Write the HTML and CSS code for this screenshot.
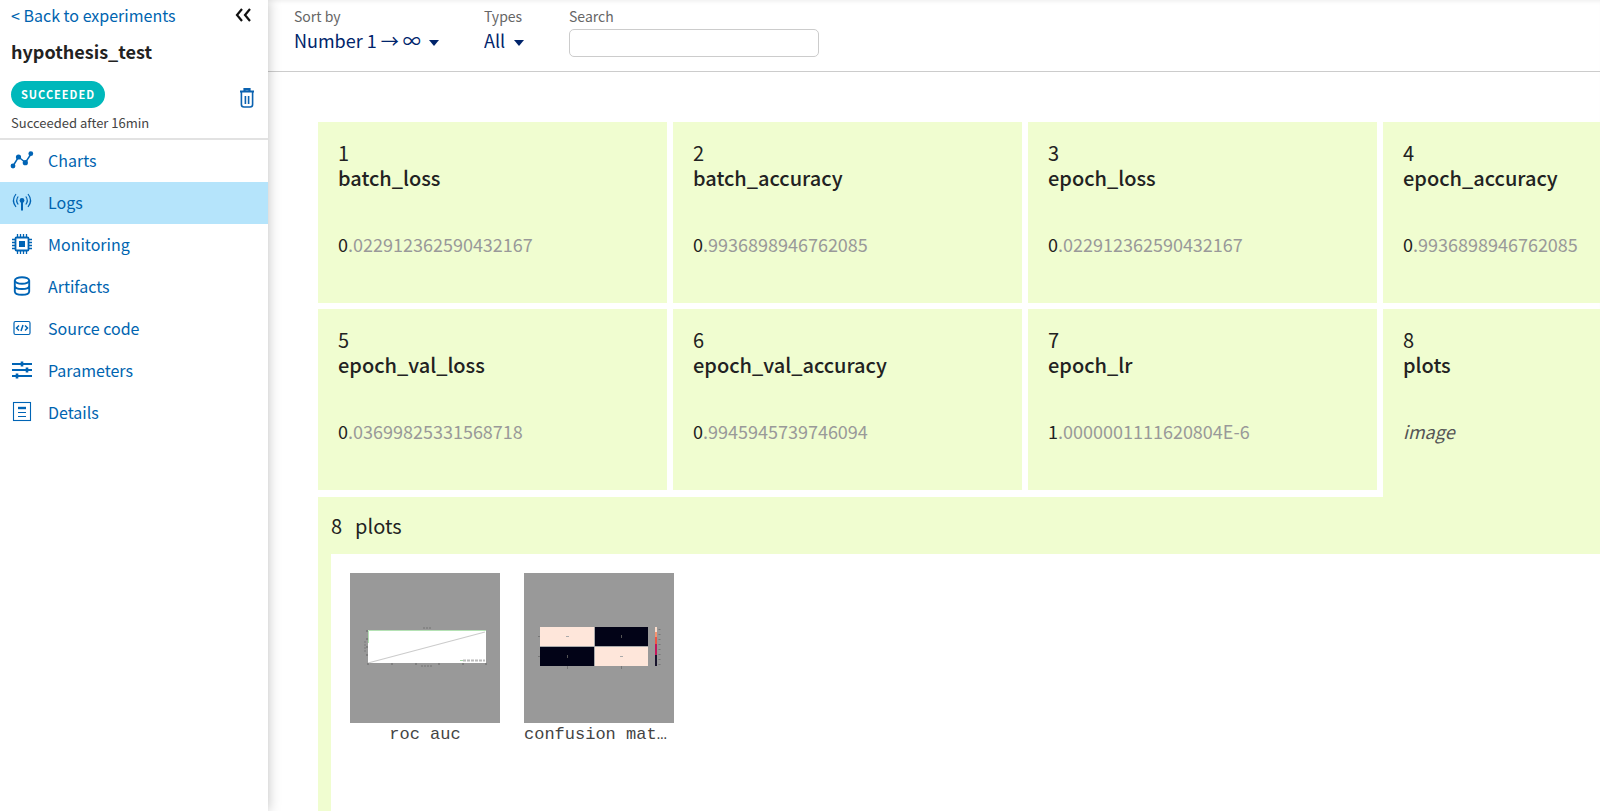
FILE: index.html
```html
<!DOCTYPE html>
<html lang="en">
<head>
    <meta charset="UTF-8">
    <meta name="viewport" content="width=device-width, initial-scale=1.0">
    <title>hypothesis_test - Logs</title>
    <link rel="stylesheet" href="styles.css">
</head>
<body>

<aside class="sidebar">
    <div class="experiment">
        <div class="row">
            <a class="back" href="#">&lt; Back to experiments</a>
            <button class="icon-btn collapse" type="button" aria-label="Collapse">
                <svg width="16" height="14" viewBox="0 0 16 14" fill="none" stroke="#111" stroke-width="2.2"><path d="M7 1 2 7l5 6M15 1l-5 6 5 6"/></svg>
            </button>
        </div>
        <h1>hypothesis_test</h1>
        <div class="row status">
            <span class="badge">SUCCEEDED</span>
            <button class="icon-btn" type="button" aria-label="Delete">
                <svg width="14" height="20" viewBox="0 0 14 20" fill="none" stroke="#0b62b0" stroke-width="1.6"><path d="M0 3.5h14M4.5 2.500V1.200h5v1.300" stroke-width="2.2"/><path d="M1.4 4v12.5q0 2.5 2.5 2.5h6.2q2.5 0 2.5-2.5V4M5.400 8v8M8.600 8v8"/></svg>
            </button>
        </div>
        <p class="after">Succeeded after 16min</p>
    </div>

    <nav class="menu">
        <a href="#">
            <svg width="24" height="22" viewBox="0 0 24 22" fill="#0064b5"><path d="M3 17 8.5 8l7 5.5L21 5" fill="none" stroke="#0064b5" stroke-width="1.5"/><circle cx="3" cy="17" r="2.4"/><circle cx="8.5" cy="8" r="2.6"/><circle cx="15.3" cy="13.7" r="2.6"/><circle cx="20.8" cy="4.7" r="2.4"/></svg>
            Charts
        </a>
        <a class="active" href="#">
            <svg width="24" height="22" viewBox="0 0 24 22" fill="none" stroke="#0064b5" stroke-width="1.2"><circle cx="12" cy="9.5" r="2.4" fill="#0064b5" stroke="none"/><path d="M12 10v9.5" stroke-width="2"/><path d="M8.2 5.5q-3 4 0 8M15.8 5.5q3 4 0 8M6 3Q.8 9.5 6 16M18 3q5.2 6.5 0 13"/></svg>
            Logs
        </a>
        <a href="#">
            <svg width="24" height="22" viewBox="0 0 24 22" fill="none" stroke="#0064b5" stroke-width="1.8"><rect x="5.5" y="4.5" width="13" height="13" rx="1"/><rect x="9" y="8" width="6" height="6" fill="#0064b5" stroke="none"/><path d="M7.5 1v3M10.500 1v3M13.500 1v3M16.500 1v3M7.500 18v3M10.500 18v3M13.500 18v3M16.500 18v3M2 6.500h3M2 9.500h3M2 12.500h3M2 15.500h3M19 6.500h3M19 9.500h3M19 12.500h3M19 15.500h3" stroke-width="1.3"/></svg>
            Monitoring
        </a>
        <a href="#">
            <svg width="24" height="22" viewBox="0 0 24 22" fill="none" stroke="#0064b5" stroke-width="1.9"><ellipse cx="12" cy="5.5" rx="7.2" ry="3.2"/><path d="M4.8 5.500v11c0 4.300 14.400 4.300 14.400 0v-11M4.800 10.800c0 4.300 14.400 4.300 14.400 0"/></svg>
            Artifacts
        </a>
        <a href="#">
            <svg width="24" height="22" viewBox="0 0 24 22" fill="none" stroke="#0064b5" stroke-width="1.2"><rect x="4" y="4.5" width="16" height="13" rx="1.5"/><path d="M9 8.500 6.500 11 9 13.500M15 8.500l2.500 2.500-2.500 2.500M13 8l-2 6" stroke-width="1.5"/></svg>
            Source code
        </a>
        <a href="#">
            <svg width="24" height="22" viewBox="0 0 24 22" fill="none" stroke="#0064b5" stroke-width="2"><path d="M2 5h20M2 11h20M2 17h20"/><path d="M12 2.500v5M17 8.500v5M7 14.500v5" stroke-width="2.6"/></svg>
            Parameters
        </a>
        <a href="#">
            <svg width="24" height="22" viewBox="0 0 24 22" fill="none" stroke="#0064b5" stroke-width="1.1"><rect x="3.5" y="1.5" width="17" height="18"/><path d="M8 7h8" stroke-width="2.4"/><path d="M8 11.500h8M8 15.500h8" stroke-width="1.2"/></svg>
            Details
        </a>
    </nav>
</aside>

<main class="main">
    <form class="toolbar">
        <div class="field">
            <label for="sort">Sort by</label>
            <div class="select">
                <select id="sort"><option>Number 1 → ∞</option></select>
                <svg width="10" height="6" viewBox="0 0 10 6"><path d="M0 0h10L5 6z" fill="#00246b"/></svg>
            </div>
        </div>
        <div class="field">
            <label for="types">Types</label>
            <div class="select">
                <select id="types"><option>All</option></select>
                <svg width="10" height="6" viewBox="0 0 10 6"><path d="M0 0h10L5 6z" fill="#00246b"/></svg>
            </div>
        </div>
        <div class="field">
            <label for="search">Search</label>
            <input id="search" type="text">
        </div>
    </form>

    <div class="logs">
        <section class="card">
            <span class="number">1</span>
            <h2>batch_loss</h2>
            <p class="value">0<span>.022912362590432167</span></p>
        </section>
        <section class="card">
            <span class="number">2</span>
            <h2>batch_accuracy</h2>
            <p class="value">0<span>.9936898946762085</span></p>
        </section>
        <section class="card">
            <span class="number">3</span>
            <h2>epoch_loss</h2>
            <p class="value">0<span>.022912362590432167</span></p>
        </section>
        <section class="card">
            <span class="number">4</span>
            <h2>epoch_accuracy</h2>
            <p class="value">0<span>.9936898946762085</span></p>
        </section>
        <section class="card">
            <span class="number">5</span>
            <h2>epoch_val_loss</h2>
            <p class="value">0<span>.03699825331568718</span></p>
        </section>
        <section class="card">
            <span class="number">6</span>
            <h2>epoch_val_accuracy</h2>
            <p class="value">0<span>.9945945739746094</span></p>
        </section>
        <section class="card">
            <span class="number">7</span>
            <h2>epoch_lr</h2>
            <p class="value">1<span>.0000001111620804E-6</span></p>
        </section>
        <section class="card open">
            <span class="number">8</span>
            <h2>plots</h2>
            <p class="value type">image</p>
        </section>

        <section class="details">
            <h3><span>8</span><span>plots</span></h3>
            <div class="images">
                <figure>
                    <svg viewBox="0 0 150 150">
                        <rect width="150" height="150" fill="#999"/>
                        <rect x="18" y="57" width="118" height="33" fill="#fff"/>
                        <path d="M18 90 135 59" stroke="#ccc" stroke-width="1.2"/>
                        <path d="M18.5 70V57.500H136" fill="none" stroke="#b4e2b4"/>
                        <path d="M73 55h9M71 93h12" stroke="#808080" stroke-width="1.5" stroke-dasharray="2 1"/>
                        <path d="M15 68v12" stroke="#858585" stroke-width="1.5" stroke-dasharray="2 1"/>
                        <path d="M16 58h2M16 66h2M16 74h2M16 82h2M17 91h2M41 91h2M65 91h2M88 91h2M112 91h2M135 91h2" stroke="#777" stroke-width="1.5"/>
                        <path d="M113 87.500h22" stroke="#bbb" stroke-width="2" stroke-dasharray="3 1"/>
                        <path d="M110 87.500h3" stroke="#a5d8a5"/>
                    </svg>
                    <figcaption>roc auc</figcaption>
                </figure>
                <figure>
                    <svg viewBox="0 0 150 150">
                        <rect width="150" height="150" fill="#999"/>
                        <path d="M16 54h54v19H16zM70 74h54v19H70z" fill="#fee6da"/>
                        <path d="M70 54h54v19H70zM16 74h54v19H16z" fill="#020317"/>
                        <path d="M16 73.500h108M70.500 54v39" stroke="#aaa" stroke-width="1"/>
                        <path d="M42 63.500h3M96 83.500h3" stroke="#aaa"/>
                        <path d="M97.500 62v3M43.500 82v3" stroke="#555"/>
                        <path d="M14 63.500h2M14 83.500h2M43.500 93v3M97.500 93v3" stroke="#777"/>
                        <path d="M132 54v6" stroke="#fbdccb" stroke-width="2"/>
                        <path d="M132 59v5" stroke="#f49371" stroke-width="2"/>
                        <path d="M132 64v7" stroke="#ee5444" stroke-width="2"/>
                        <path d="M132 71v11" stroke="#c4165b" stroke-width="2"/>
                        <path d="M132 82v11" stroke="#17132c" stroke-width="2"/>
                        <path d="M135.500 56v36" stroke="#777" stroke-width="2" stroke-dasharray="1 4"/>
                    </svg>
                    <figcaption>confusion matrix</figcaption>
                </figure>
            </div>
        </section>
    </div>
</main>

</body>
</html>
```

FILE: styles.css
```css
* {
    box-sizing: border-box;
}

body {
    margin: 0;
    display: flex;
    height: 100vh;
    overflow: hidden;
    font-family: "Noto Sans CJK SC", "Noto Sans", sans-serif;
    font-size: 16px;
    line-height: 24px;
    color: #222;
    background-color: #fff;
}

h1, h2, h3, p, figure {
    margin: 0;
}

a {
    color: #0064b0;
    text-decoration: none;
}

.sidebar {
    flex: none;
    width: 268px;
    background-color: #fff;
    box-shadow: 0 0 12px rgba(0, 0, 0, 0.25);
    z-index: 1;
}

.experiment {
    padding: 3px 14px 3px 11px;
    border-bottom: 2px solid #e2e2e2;
}

.row {
    display: flex;
    justify-content: space-between;
    align-items: center;
}

.icon-btn {
    display: flex;
    padding: 0;
    border: none;
    background: none;
    cursor: pointer;
}

.collapse {
    margin-right: 3px;
}

h1 {
    margin-top: 10px;
    font-size: 18px;
    line-height: 28px;
    font-weight: 600;
}

.status {
    align-items: flex-end;
    margin-top: 16px;
}

.badge {
    padding: 1px 10px 2px;
    border-radius: 14px;
    background-color: #00b8bb;
    color: #fff;
    font-size: 11px;
    font-weight: 600;
    letter-spacing: 1px;
}

.after {
    margin-top: 3px;
    font-size: 13px;
    line-height: 24px;
    color: #444;
}

.menu a {
    display: flex;
    align-items: center;
    gap: 14px;
    height: 42px;
    padding: 0 0 2px 10px;
}

.menu .active {
    background-color: #b5e4fb;
}

.main {
    flex: 1;
    min-width: 0;
    overflow: hidden;
    box-shadow: inset 0 4px 4px -3px rgba(0, 0, 0, 0.08);
}

.toolbar {
    display: flex;
    gap: 45px;
    height: 72px;
    padding: 6px 26px;
    border-bottom: 1px solid #ccc;
}

.field label {
    display: block;
    font-size: 14px;
    line-height: 20px;
    color: #666;
}

.select {
    display: flex;
    align-items: center;
    gap: 8px;
}

.select svg {
    margin-top: 5px;
}

select {
    appearance: none;
    padding: 0;
    border: none;
    background: none;
    font: inherit;
    font-size: 18px;
    line-height: 28px;
    color: #00246b;
}

.field input {
    width: 250px;
    height: 28px;
    margin-top: 3px;
    padding: 0 8px;
    border: 1px solid #ccc;
    border-radius: 5px;
    font: inherit;
}

.logs {
    display: grid;
    grid-template-columns: repeat(4, minmax(349px, 1fr));
    gap: 6px;
    padding: 50px;
}

.card {
    padding: 18px 20px 46px;
    background-color: #f0fdd0;
}

.number, h2, h3 {
    display: block;
    font-size: 20px;
    line-height: 25px;
}

h2 {
    font-weight: 500;
}

.value {
    margin-top: 41px;
    font-size: 18px;
    line-height: 26px;
}

.value span {
    color: #999;
}

.type {
    font-style: italic;
    color: #555;
}

/* joins the opened card with its details */
.open {
    margin-bottom: -7px;
}

.details {
    grid-column: 1 / -1;
    margin-top: 1px;
    padding: 16px 13px;
    background-color: #f0fdd0;
}

h3 {
    display: flex;
    gap: 13px;
    font-weight: 400;
}

.images {
    display: flex;
    gap: 24px;
    height: 100vh;
    margin-top: 16px;
    padding: 19px;
    background-color: #fff;
}

figure {
    width: 150px;
}

figure svg {
    display: block;
    width: 100%;
}

figcaption {
    overflow: hidden;
    text-overflow: ellipsis;
    white-space: nowrap;
    text-align: center;
    font-family: "Liberation Mono", monospace;
    font-size: 17px;
    line-height: 24px;
    color: #444;
}
```
